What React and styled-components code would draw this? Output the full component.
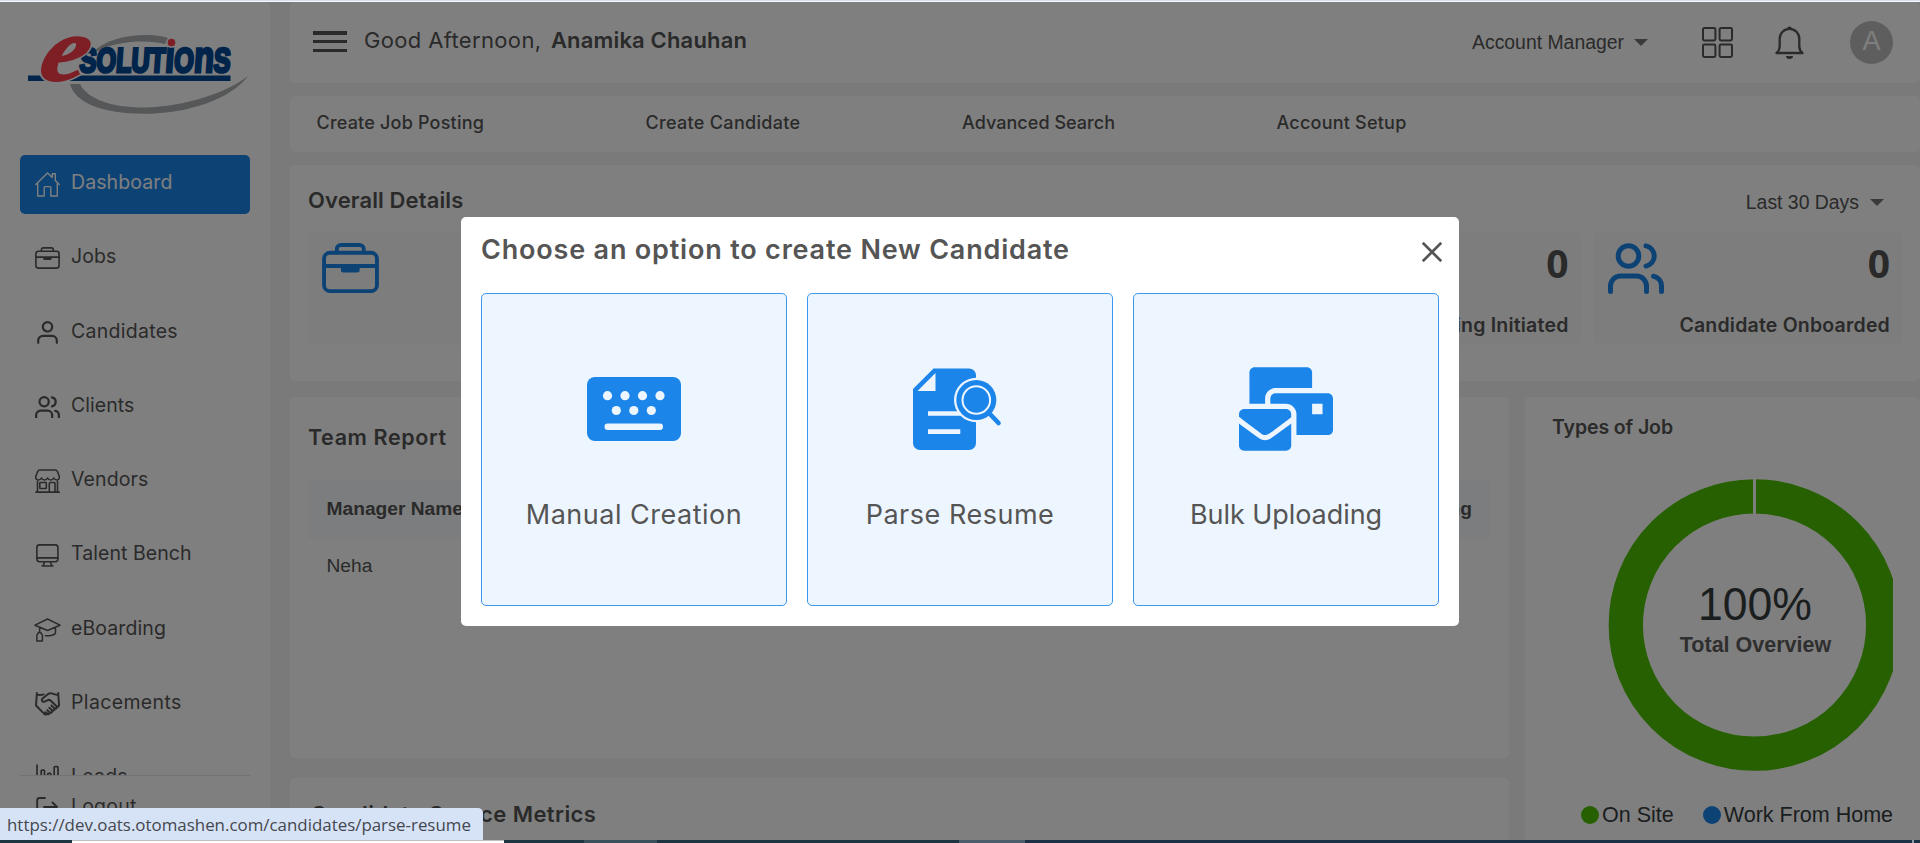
import React from 'react';
import styled, { createGlobalStyle } from 'styled-components';
import { FaMailBulk } from 'react-icons/fa';

const BRAND = '#1b85ea';
const TEXT = '#555555';
const ARIAL = '"Liberation Sans", Arial, sans-serif';

const GlobalStyle = createGlobalStyle`
  *, *::before, *::after { box-sizing: border-box; }
  body {
    margin: 0;
    overflow: hidden;
    background: #f4f4f4;
    color: ${TEXT};
    font-family: Inter, sans-serif;
  }
  svg { display: block; flex: none; }
`;

/* ---------- shell ---------- */

const Shell = styled.div`
  display: flex;
  flex-direction: column;
  height: 843px;
  overflow: hidden;
`;

const WindowEdge = styled.div`
  height: 2px;
  background: #d9dff0;
  border-bottom: 1px solid #f6f8fd;
`;

const Body = styled.div`
  display: flex;
  height: 838px;
  overflow: hidden;
`;

const Taskbar = styled.div`
  display: flex;
  height: 3px;
`;

const TaskSegment = styled.div`
  flex: ${(p) => (p.$width ? `0 0 ${p.$width}px` : '1')};
  background: ${(p) => p.$color};
  border-top: 1px solid ${(p) => p.$edge || p.$color};
`;

/* ---------- sidebar ---------- */

const Sidebar = styled.aside`
  flex: 0 0 270px;
  display: flex;
  flex-direction: column;
  background: #fff;
  border-radius: 0 5px 0 0;
`;

const LogoArea = styled.div`
  height: 153px;
`;

const MenuList = styled.nav`
  display: flex;
  flex-direction: column;
  gap: 15.3px;
  height: 620px;
  margin: 0 20px;
  overflow: hidden;
`;

const MenuItem = styled.div`
  flex: none;
  display: flex;
  align-items: center;
  height: 59px;
  padding-left: 15px;
  border-radius: 5px;
  color: ${(p) => (p.$active ? '#fff' : TEXT)};
  background: ${(p) => (p.$active ? BRAND : 'transparent')};
`;

const MenuIcon = styled.span`
  display: flex;
  justify-content: center;
  width: 25px;
  margin-right: 11px;
  padding-bottom: 1px;
`;

const MenuLabel = styled.span`
  padding-bottom: 5px;
  font-size: 19.5px;
  line-height: 24px;
  letter-spacing: ${(p) => p.$track || 0}px;
`;

const MenuFooter = styled.div`
  margin: 0 20px;
  padding-top: 3px;
  border-top: 1px solid #e4e4e4;
`;

/* ---------- main column ---------- */

const Main = styled.main`
  flex: 1;
  min-width: 0;
  display: flex;
  flex-direction: column;
  margin-left: 20px;
`;

const Panel = styled.section`
  flex: none;
  background: #fff;
  border-radius: 5px;
`;

const Header = styled(Panel)`
  display: flex;
  align-items: center;
  height: 81px;
  padding: 0 27px 0 23px;
`;

const Burger = styled.div`
  display: flex;
  flex-direction: column;
  justify-content: space-between;
  width: 34px;
  height: 21px;
  margin: 0 17px 2px 0;
`;

const BurgerBar = styled.i`
  height: 3.5px;
  background: ${TEXT};
`;

const Greeting = styled.div`
  display: flex;
  gap: 9.5px;
  padding-bottom: 5px;
  font-size: 22px;
  line-height: 28px;
  letter-spacing: 0.35px;
  white-space: nowrap;

  strong {
    font-weight: 600;
    letter-spacing: 0.16px;
  }
`;

const HeaderTools = styled.div`
  display: flex;
  align-items: center;
  margin-left: auto;
`;

const Select = styled.div`
  display: flex;
  align-items: center;
  gap: 10px;
  padding-bottom: 1px;
  font-family: ${ARIAL};
  font-size: 19.4px;
  line-height: 24px;
`;

const Caret = styled.i`
  border: 7px solid transparent;
  border-top-color: #757575;
  border-bottom-width: 0;
`;

const AppsIcon = styled.div`
  margin-left: 54px;
`;

const BellIcon = styled.div`
  margin-left: 42px;
`;

const Avatar = styled.div`
  display: grid;
  place-items: center;
  width: 43px;
  height: 43px;
  margin-left: 46px;
  padding-bottom: 3px;
  border-radius: 50%;
  background: #bdbdbd;
  color: #fff;
  font: 27px/30px ${ARIAL};
`;

const QuickLinks = styled(Panel)`
  display: grid;
  grid-template-columns: 329px 316.5px 314.5px auto;
  align-items: center;
  height: 56px;
  margin-top: 13px;
  padding: 0 0 3px 26.5px;
`;

const QuickLink = styled.a`
  font-size: 18px;
  font-weight: 500;
  letter-spacing: ${(p) => p.$track}px;
`;

const Overall = styled(Panel)`
  height: 216px;
  margin-top: 13px;
  padding: 0 18px;
`;

const OverallHead = styled.div`
  display: flex;
  align-items: center;
  justify-content: space-between;
  height: 66px;
  padding-right: 18px;

  ${Select} { padding: 8px 0 0; gap: 11px; }
`;

const SectionTitle = styled.h2`
  margin: 0;
  padding: ${(p) => p.$pad || '3px 0 0'};
  font-size: ${(p) => p.$size || 22}px;
  font-weight: 600;
  line-height: 28px;
  letter-spacing: ${(p) => p.$track || 0}px;
  white-space: nowrap;
`;

const StatGrid = styled.div`
  display: grid;
  grid-template-columns: repeat(5, 1fr);
  gap: 13.5px;
`;

const Stat = styled.div`
  display: flex;
  flex-direction: column;
  justify-content: space-between;
  height: 114px;
  padding: 12px 12px 7px 14px;
  border-radius: 6px;
  background: #fbfbfb;
`;

const StatTop = styled.div`
  display: flex;
  justify-content: space-between;
`;

const StatIcon = styled.span`
  color: ${BRAND};
`;

const StatValue = styled.b`
  font: 700 39px/40px "Open Sans", sans-serif;
`;

const StatLabel = styled.div`
  height: 26px;
  font-size: 19.5px;
  font-weight: 600;
  line-height: 26px;
  letter-spacing: 0.2px;
  text-align: right;
  white-space: nowrap;
`;

const Lower = styled.div`
  display: grid;
  grid-template-columns: 1219px 395px;
  gap: 16px;
  flex: 1;
  min-height: 0;
  margin-top: 16px;
`;

const LowerLeft = styled.div`
  display: flex;
  flex-direction: column;
  gap: 20px;
  min-height: 0;
`;

const TeamReport = styled(Panel)`
  height: 361px;
  padding: 0 18px;
`;

const TitleRow = styled.div`
  display: flex;
  align-items: center;
  height: ${(p) => p.$height}px;
`;

const TableRow = styled.div`
  display: flex;
  align-items: center;
  justify-content: space-between;
  height: ${(p) => (p.$head ? 59 : 54)}px;
  padding: 0 19px ${(p) => (p.$head ? 2 : 0)}px 18.5px;
  background: ${(p) => (p.$head ? '#f9fafd' : 'transparent')};
  font: ${(p) => (p.$head ? 700 : 400)} 19.2px/24px ${ARIAL};
`;

const SourceMetrics = styled(Panel)`
  flex: 1;
  padding-left: 20.5px;
  border-radius: 5px 5px 0 0;
`;

const JobTypes = styled(Panel)`
  padding: 0 27px;
  border-radius: 5px 5px 0 0;
`;

const Legend = styled.div`
  display: flex;
  justify-content: flex-end;
  align-items: center;
  gap: 29px;
  height: 40px;
  padding-top: 1px;
  font: 21.5px/26px ${ARIAL};
  color: #373d3f;
  white-space: nowrap;
`;

const LegendItem = styled.span`
  display: flex;
  align-items: center;
  gap: 3px;

  &::before {
    content: '';
    width: 18px;
    height: 18px;
    border-radius: 50%;
    background: ${(p) => p.$color};
  }
`;

/* ---------- dialog ---------- */

const Backdrop = styled.div`
  position: fixed;
  inset: 2px 0 3px;
  display: flex;
  justify-content: center;
  align-items: flex-start;
  padding-top: 215.4px;
  background: rgba(0, 0, 0, 0.5);
`;

const Dialog = styled.div`
  width: 998px;
  height: 409px;
  padding: 0 20px;
  border-radius: 5px;
  background: #fff;
`;

const DialogHead = styled.div`
  display: flex;
  align-items: center;
  justify-content: space-between;
  height: 75.6px;
  padding: 0 0 6px;
`;

const DialogTitle = styled.h1`
  margin: 0;
  padding-bottom: 4px;
  font-size: 27px;
  font-weight: 600;
  line-height: 34px;
  letter-spacing: 0.81px;
`;

const CloseButton = styled.button`
  display: flex;
  margin-right: -2.5px;
  padding: 0;
  border: 0;
  background: none;
`;

const Options = styled.div`
  display: grid;
  grid-template-columns: repeat(3, 306px);
  gap: 20px;
`;

const Option = styled.div`
  height: 313px;
  padding-top: 25px;
  border: 1px solid #3b97ef;
  border-radius: 5px;
  background: #edf5ff;
  text-align: center;
`;

const OptionIcon = styled.div`
  display: grid;
  place-items: center;
  height: 180px;
  color: ${BRAND};
`;

const OptionLabel = styled.div`
  padding-top: 1px;
  font-size: 27px;
  line-height: 30px;
  letter-spacing: ${(p) => p.$track}px;
`;

const BulkIcon = styled(FaMailBulk)`
  width: 94px;
  height: 84px;
`;

const LinkStatus = styled.div`
  position: fixed;
  left: 0;
  bottom: 3px;
  width: 483px;
  height: 32px;
  padding: 1px 0 0 7px;
  border-radius: 0 5px 0 0;
  background: #d6e3f7;
  color: #45474d;
  font: 16.9px/32px "Open Sans", sans-serif;
  white-space: nowrap;
`;

/* ---------- drawings ---------- */

const Line = ({ w, h, sw = 1.4, children, box }) => (
  <svg width={w} height={h} viewBox={box || `0 0 ${w} ${h}`} fill="none" stroke="currentColor"
    strokeWidth={sw} strokeLinecap="round" strokeLinejoin="round">{children}</svg>
);

const Logo = () => (
  <svg width="270" height="118" viewBox="0 2 270 118">
    <path d="M91 54C103 41 123 35 146 35C156 35 162 36 168 38L165 44C150 40 118 40 98 51Z" fill="#acaeb0" />
    <path d="M70 84H80C87 99 113 108 145 107.500C185 106.500 226 93 248 76C231 99 188 114 143 113.800C103 113.500 75 103 70 84Z" fill="#acaeb0" />
    <rect x="28" y="75.500" width="202.500" height="5.500" fill="#004894" />
    <text x="84" y="72.500" fontSize="34" textLength="151" lengthAdjust="spacingAndGlyphs" transform="skewX(-4)"
      fill="#004894" stroke="#004894" strokeWidth="3" fontFamily="Liberation Sans" fontWeight="700">
      SOLUT<tspan fontSize="44">ı</tspan>O<tspan fontSize="44">n</tspan>S
    </text>
    <circle cx="171.500" cy="42.500" r="4.600" fill="#fa3e4a" stroke="#fff" strokeWidth="1.500" />
    <text x="58" y="80" fontSize="91" textLength="46" lengthAdjust="spacingAndGlyphs" fontFamily="Liberation Serif"
      fontWeight="700" fontStyle="italic" transform="skewX(-15)" fill="none" stroke="#fff" strokeWidth="5">e</text>
    <text x="58" y="80" fontSize="91" textLength="46" lengthAdjust="spacingAndGlyphs" fontFamily="Liberation Serif"
      fontWeight="700" fontStyle="italic" transform="skewX(-15)" fill="#fa3e4a" stroke="#fa3e4a" strokeWidth="2">e</text>
  </svg>
);

const House = () => (
  <Line w={25} h={25} sw={1.4}>
    <path d="M.8 12.400 12.500 1 17.300 5.500V1.800h3V8.500L24.200 12.400M2.700 11.500V24H9.200V15.600c0-.7.3-1 1-1h4.600c.7 0 1 .3 1 1V24h6.500V11.500" />
  </Line>
);

const Briefcase = ({ w = 25, sw = 1.6 }) => (
  <Line w={w} h={(w * 22) / 25} sw={sw} box="0 0 25 22">
    <rect x=".9" y="4.300" width="23.200" height="16.800" rx="2.600" />
    <path d="M6.500 4.200V2.600c0-1 .7-1.700 1.800-1.700h8.200c1 0 1.800.7 1.800 1.700v1.600M.8 10.100h23.400" />
    <path d="M8.300 10.100h8.200v1.800c0 .6-.4 1-1 1H9.300c-.6 0-1-.4-1-1z" fill="currentColor" stroke="none" />
  </Line>
);

const Person = () => (
  <Line w={21} h={23} sw={2.2}>
    <circle cx="10.500" cy="5.800" r="4.700" />
    <path d="M1.200 21.800v-2.300a4.700 4.700 0 0 1 4.700-4.700h9.200a4.700 4.700 0 0 1 4.700 4.700v2.300" />
  </Line>
);

const People = ({ w = 25 }) => (
  <Line w={w} h={(w * 51) / 56} sw={5} box="0 0 56 51">
    <circle cx="20.500" cy="13" r="10.300" />
    <path d="M38 2.900a10.300 10.300 0 0 1 0 20.200M2.500 48.500V43a10 10 0 0 1 10-10h16a10 10 0 0 1 10 10v5.500M45.500 33.200a10 10 0 0 1 8 9.800v5.500" />
  </Line>
);

const Store = () => (
  <Line w={25} h={24} sw={1.600}>
    <path d="M4.500 1h16c1 0 1.400.5 1.800 1.300l2 5c.4 2-.6 3.700-2.500 3.700-1.600 0-2.500-1-3-2-.5 1-1.600 2-3.100 2s-2.600-1-3.100-2c-.5 1-1.600 2-3.100 2s-2.500-1-3-2c-.5 1-1.500 2-3.100 2C1.300 11 .3 9.300.8 7.300l2-5C3.200 1.500 3.600 1 4.500 1zM2.500 11v12M22.500 11v12M.8 23.100h23.500" />
    <rect x="4.800" y="13.500" width="6.500" height="6" rx=".5" />
    <path d="M14.300 23v-8.500c0-.6.400-1 1-1h3.700c.6 0 1 .4 1 1V23" />
  </Line>
);

const Monitor = () => (
  <Line w={23} h={23} sw={1.600}>
    <rect x=".9" y=".9" width="21" height="16.800" rx="2.600" />
    <path d="M1 13.900h21M8.500 17.800l-1.200 4M14.500 17.800l1.200 4M6 22h11" />
  </Line>
);

const GradCap = () => (
  <Line w={27} h={24} sw={1.500}>
    <path d="M13.500 1 26 7.200 13.500 12.500 1 7.200zM5.600 9.300v5M21.500 9.300v5c0 1.500-1.500 2.600-3.600 3-2.300.5-4 .7-6.400.4" />
    <path d="M4.600 14.500h2l1.800 2.600v5.800H2.900v-5.800z" />
  </Line>
);

const Handshake = () => (
  <Line w={25} h={24} sw={2}>
    <path d="M1.800 1v2L1 13.500l8.500 8.600c1 .8 2.200.4 2.700-.8M23.300 1v2l.8 10.500-3 3M1.800 2.600c2.500.6 4.500.5 6.800-.2M23.300 2.600c-2 .4-3.700 0-5.500-.9-2-.9-3.600-.6-5 .5L7.600 6.500c-1.600 1.500-.2 4 2 3.100l3.200-1.500c1.200-.5 2-.3 3 .6l5.300 5.100c1.400 1.500-.3 3.400-2 2.200l-2.700-2.400M19.300 16.200c.8 1.600-.9 3.100-2.300 2l-2.700-2.400M17 18.700c.5 1.600-1 2.700-2.300 1.700l-2.400-2.200M14.700 20.600c0 1.500-1.600 2.200-2.700 1.200l-1.600-1.500" />
  </Line>
);

const Bars = () => (
  <Line w={24} h={28} sw={1.700}>
    <path d="M1 1v26h22M5.200 27V7c0-.6.300-.9.900-.9h1.500c.6 0 .9.300.9.900v20M11.700 27V10.200c0-.6.3-.9.900-.9h1.400c.6 0 .9.300.9.900V27M18.200 27V3.500c0-.6.3-.9.900-.9h2c.6 0 .9.300.9.900V27" />
  </Line>
);

const Exit = () => (
  <Line w={23} h={22} sw={1.900}>
    <path d="M9 1H3.500C2 1 1.200 1.800 1.200 3.200v15.600c0 1.400.8 2.200 2.300 2.200H9M8 10h13M16.500 5.500 21 10l-4.500 4.500" />
  </Line>
);

const Apps = () => (
  <Line w={31} h={31} sw={2}>
    {[1, 17.600].map((y) => [1, 17.600].map((x) => (
      <rect key={`${x}-${y}`} x={x} y={y} width="12.400" height="12.400" rx="1.400" />
    )))}
  </Line>
);

const Bell = () => (
  <Line w={29} h={33} sw={2.300}>
    <path d="M1.500 27h26c-2.200-1.700-3.200-3.700-3.200-6.500v-7.800a9.800 9.800 0 0 0-19.600 0v7.800c0 2.800-1 4.800-3.200 6.500z" />
    <path d="M12 3a2.500 2.500 0 0 1 5 0zM11 30h7a3.500 3 0 0 1-7 0z" fill="currentColor" stroke="none" />
  </Line>
);

const Keyboard = () => (
  <svg width="94" height="64" viewBox="0 0 94 64" fill="#edf5ff">
    <rect width="94" height="64" rx="8" fill={BRAND} />
    {[20.500, 38, 55.500, 73].map((x) => <circle key={x} cx={x} cy="18.700" r="4.600" />)}
    {[29.300, 46.800, 64.300].map((x) => <circle key={x} cx={x} cy="33.500" r="4.600" />)}
    <rect x="17.500" y="46.500" width="58.500" height="6.500" rx="3.200" />
  </svg>
);

const ResumeSearch = () => (
  <svg width="94" height="84" viewBox="0 0 94 84">
    <path d="M0 22 20.500 1.500H56a7 7 0 0 1 7 7V76a7 7 0 0 1-7 7H7a7 7 0 0 1-7-7z" fill={BRAND} />
    <path d="M4.500 24 22.500 6v18zM15 44.300h34v4.500H15zM15 62.300h32.300v4.700H15z" fill="#edf5ff" />
    <circle cx="63.300" cy="33" r="22.300" fill="#edf5ff" />
    <circle cx="63.300" cy="33" r="20" fill={BRAND} />
    <circle cx="63.300" cy="33" r="13.800" fill={BRAND} stroke="#edf5ff" strokeWidth="2" />
    <path d="m75.500 45.500 10 10.500" stroke={BRAND} strokeWidth="4.600" strokeLinecap="round" />
  </svg>
);

const Close = () => (
  <Line w={20} h={20} sw={2.700}>
    <path d="m.8.8 18.400 18.400M19.200.8.8 19.200" stroke={TEXT} strokeLinecap="butt" />
  </Line>
);

const Donut = () => (
  <svg width="341" height="337" viewBox="0 0 341 337" textAnchor="middle" fontFamily="Liberation Sans, Arial, sans-serif">
    <circle cx="202.500" cy="168" r="128.700" fill="none" stroke="#4cc000" strokeWidth="34.300" />
    <rect x="201" y="20" width="3" height="38" fill="#fff" />
    <text x="203" y="163" fontSize="46" textLength="114" lengthAdjust="spacingAndGlyphs" fill="#373d3f">100%</text>
    <text x="203.500" y="194.700" fontSize="21.500" fontWeight="700" fill="#5f5f5f">Total Overview</text>
  </svg>
);

/* ---------- page ---------- */

const menu = [
  { label: 'Dashboard', icon: <House />, track: 0.1, active: true },
  { label: 'Jobs', icon: <Briefcase />, track: 0.1 },
  { label: 'Candidates', icon: <Person />, track: 0.28 },
  { label: 'Clients', icon: <People />, track: 0.05 },
  { label: 'Vendors', icon: <Store />, track: 0.1 },
  { label: 'Talent Bench', icon: <Monitor />, track: 0.06 },
  { label: 'eBoarding', icon: <GradCap />, track: 0.1 },
  { label: 'Placements', icon: <Handshake />, track: 0.35 },
  { label: 'Leads', icon: <Bars />, track: 0.2 },
];

const links = [
  ['Create Job Posting', 0.2],
  ['Create Candidate', 0.32],
  ['Advanced Search', 0.04],
  ['Account Setup', 0.22],
];

const stats = [
  { icon: <Briefcase w={57} sw={1.700} /> },
  {},
  {},
  { value: 0, label: 'Onboarding Initiated' },
  { icon: <People w={56} />, value: 0, label: 'Candidate Onboarded' },
];

const options = [
  { label: 'Manual Creation', track: 0.5, icon: <Keyboard /> },
  { label: 'Parse Resume', track: 0.52, icon: <ResumeSearch /> },
  { label: 'Bulk Uploading', track: -0.05, icon: <BulkIcon /> },
];

export default function App() {
  return (
    <Shell>
      <GlobalStyle />
      <WindowEdge />
      <Body>
        <Sidebar>
          <LogoArea><Logo /></LogoArea>
          <MenuList>
            {menu.map((m) => (
              <MenuItem key={m.label} $active={m.active}>
                <MenuIcon>{m.icon}</MenuIcon>
                <MenuLabel $track={m.track}>{m.label}</MenuLabel>
              </MenuItem>
            ))}
          </MenuList>
          <MenuFooter>
            <MenuItem>
              <MenuIcon><Exit /></MenuIcon>
              <MenuLabel $track={0.2}>Logout</MenuLabel>
            </MenuItem>
          </MenuFooter>
        </Sidebar>

        <Main>
          <Header>
            <Burger><BurgerBar /><BurgerBar /><BurgerBar /></Burger>
            <Greeting><span>Good Afternoon,</span><strong>Anamika Chauhan</strong></Greeting>
            <HeaderTools>
              <Select>Account Manager<Caret /></Select>
              <AppsIcon><Apps /></AppsIcon>
              <BellIcon><Bell /></BellIcon>
              <Avatar>A</Avatar>
            </HeaderTools>
          </Header>

          <QuickLinks>
            {links.map(([label, track]) => <QuickLink key={label} $track={track}>{label}</QuickLink>)}
          </QuickLinks>

          <Overall>
            <OverallHead>
              <SectionTitle $track={0.12}>Overall Details</SectionTitle>
              <Select>Last 30 Days<Caret /></Select>
            </OverallHead>
            <StatGrid>
              {stats.map((s, i) => (
                <Stat key={i}>
                  <StatTop>
                    <StatIcon>{s.icon}</StatIcon>
                    <StatValue>{s.value}</StatValue>
                  </StatTop>
                  <StatLabel>{s.label}</StatLabel>
                </Stat>
              ))}
            </StatGrid>
          </Overall>

          <Lower>
            <LowerLeft>
              <TeamReport>
                <TitleRow $height={83}>
                  <SectionTitle $size={21.5} $track={0.6} $pad="0 0 4px">Team Report</SectionTitle>
                </TitleRow>
                <TableRow $head><span>Manager Name</span><span>Pending</span></TableRow>
                <TableRow><span>Neha</span></TableRow>
              </TeamReport>
              <SourceMetrics>
                <TitleRow $height={72}>
                  <SectionTitle $track={0.42} $pad="0">Candidate Source Metrics</SectionTitle>
                </TitleRow>
              </SourceMetrics>
            </LowerLeft>
            <JobTypes>
              <TitleRow $height={60}>
                <SectionTitle $size={19.5} $track={-0.1} $pad="0">Types of Job</SectionTitle>
              </TitleRow>
              <Donut />
              <Legend>
                <LegendItem $color="#4cc000">On Site</LegendItem>
                <LegendItem $color={BRAND}>Work From Home</LegendItem>
              </Legend>
            </JobTypes>
          </Lower>
        </Main>
      </Body>

      <Taskbar>
        <TaskSegment $width={72} $color="#1c3641" />
        <TaskSegment $width={432} $color="#ffffff" $edge="#bdbdbd" />
        <TaskSegment $width={80} $color="#1d3441" />
        <TaskSegment $width={73} $color="#3a505b" />
        <TaskSegment $width={302} $color="#1d3441" />
        <TaskSegment $width={66} $color="#4c5d6b" />
        <TaskSegment $color="#1b2f45" />
        <TaskSegment $width={2} $color="#8d99a6" />
        <TaskSegment $width={6} $color="#1b2f45" />
      </Taskbar>

      <Backdrop>
        <Dialog role="dialog">
          <DialogHead>
            <DialogTitle>Choose an option to create New Candidate</DialogTitle>
            <CloseButton aria-label="Close"><Close /></CloseButton>
          </DialogHead>
          <Options>
            {options.map((o) => (
              <Option key={o.label}>
                <OptionIcon>{o.icon}</OptionIcon>
                <OptionLabel $track={o.track}>{o.label}</OptionLabel>
              </Option>
            ))}
          </Options>
        </Dialog>
      </Backdrop>

      <LinkStatus>https://dev.oats.otomashen.com/candidates/parse-resume</LinkStatus>
    </Shell>
  );
}
